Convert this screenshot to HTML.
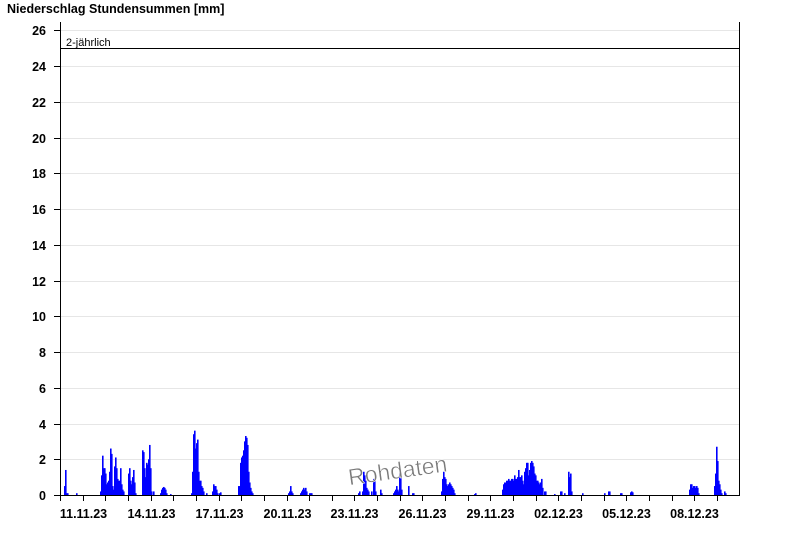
<!DOCTYPE html>
<html><head><meta charset="utf-8"><style>
html,body{margin:0;padding:0;background:#fff;width:800px;height:550px;overflow:hidden}
svg{display:block;font-family:"Liberation Sans",Arial,sans-serif}
</style></head><body>
<svg id="s" width="800" height="550" xmlns="http://www.w3.org/2000/svg">
<text x="7" y="13" font-size="12.5" font-weight="bold" fill="#000">Niederschlag Stundensummen [mm]</text>
<g id="grid" stroke="#e6e6e6" stroke-width="1"></g>
<g id="bars" fill="#0000ff"></g>
<line x1="60" y1="48.5" x2="740" y2="48.5" stroke="#000" stroke-width="1"/>
<text x="66" y="46" font-size="11" fill="#000">2-jährlich</text>
<line x1="60.5" y1="22" x2="60.5" y2="496" stroke="#000"/>
<line x1="739.5" y1="22" x2="739.5" y2="496" stroke="#000"/>
<line x1="60" y1="495.5" x2="740" y2="495.5" stroke="#000"/>
<g id="ax" font-size="12.5" font-weight="bold" fill="#000"></g>
<text x="347" y="478" font-size="23" fill="#7a7a7a" stroke="#fff" stroke-width="0.5" transform="rotate(-8 400 465)">Rohdaten</text>
</svg>
<script>
var ns="http://www.w3.org/2000/svg";
function el(p,t,a,txt){var e=document.createElementNS(ns,t);for(var k in a)e.setAttribute(k,a[k]);if(txt)e.textContent=txt;document.getElementById(p).appendChild(e);}
function Y(v){return 495-v*17.875;}
for(var v=2;v<=26;v+=2){el('grid','line',{x1:61,x2:739,y1:Math.round(Y(v))+0.5,y2:Math.round(Y(v))+0.5});}
for(var v=0;v<=26;v+=2){var y=Math.round(Y(v))+0.5;el('ax','line',{x1:54,x2:60,y1:y,y2:y,stroke:'#000'});el('ax','text',{x:46,y:y+4.5,'text-anchor':'end'},String(v));}
var labels=['11.11.23','14.11.23','17.11.23','20.11.23','23.11.23','26.11.23','29.11.23','02.12.23','05.12.23','08.12.23'];
for(var k=0;k<30;k++){var x=Math.round(60+22.65*k)+0.5;if(x>740)break;el('ax','line',{x1:x,x2:x,y1:495,y2:501,stroke:'#000'});if(k%3==1){el('ax','text',{x:x,y:518,'text-anchor':'middle'},labels[(k-1)/3]);}}
var d=[[64,.5],[65,1.4],[66,.1],[67,.1],[76,.1],
[100,.2],[101,1.1],[102,2.2],[103,1.5],[104,1.5],[105,1.2],[106,.6],[107,.7],[108,.8],[109,1.3],[110,2.6],[111,2.3],[112,.5],[113,.3],[114,1.6],[115,2.1],[116,1.5],[117,.9],[118,.8],[119,.8],[120,1.5],[121,.6],[122,.3],[123,.2],
[128,1.2],[129,1.5],[130,.8],[131,.6],[132,1.0],[133,1.4],[134,.7],[135,.1],
[142,2.5],[143,2.4],[144,1.5],[145,1.0],[146,1.8],[147,1.7],[148,2.0],[149,2.8],[150,1.5],[151,.2],[153,.2],
[160,.1],[161,.3],[162,.4],[163,.45],[164,.4],[165,.3],[166,.1],[170,.05],
[191,.1],[192,1.3],[193,3.4],[194,3.6],[195,2.6],[196,2.9],[197,3.1],[198,1.3],[199,.8],[200,.8],[201,.5],[202,.4],[203,.2],[206,.1],
[212,.2],[213,.6],[214,.5],[215,.5],[216,.3],[217,.1],[219,.1],[220,.15],
[238,.5],[239,.5],[240,1.8],[241,2.1],[242,2.2],[243,2.5],[244,3.0],[245,3.3],[246,3.2],[247,2.8],[248,1.3],[249,.7],[250,.4],[251,.2],[252,.1],
[288,.1],[289,.2],[290,.5],[291,.2],[292,.1],[300,.1],[301,.2],[302,.3],[303,.4],[304,.3],[305,.4],[306,.2],[309,.1],[310,.1],[311,.1],
[358,.1],[359,.2],[362,.2],[363,1.3],[364,1.1],[365,.8],[366,.4],[367,.3],[368,.2],[371,.2],[373,.9],[374,.9],[375,.2],[380,.3],[381,.1],
[393,.1],[394,.2],[395,.3],[396,.5],[397,.3],[398,.2],[399,1.2],[400,1.2],[401,.3],[408,.5],[412,.1],[413,.1],
[441,.2],[442,.9],[443,1.3],[444,1.0],[445,.9],[446,.6],[447,.5],[448,.6],[449,.7],[450,.6],[451,.5],[452,.4],[453,.3],[454,.1],[474,.05],[475,.1],
[502,.3],[503,.6],[504,.7],[505,.7],[506,.8],[507,.8],[508,.9],[509,.8],[510,.8],[511,.9],[512,.9],[513,.8],[514,1.1],[515,.9],[516,.9],[517,1.0],[518,1.4],[519,1.0],[520,1.0],[521,1.1],[522,.8],[523,.6],[524,1.3],[525,1.5],[526,1.8],[527,1.8],[528,1.1],[529,1.4],[530,1.8],[531,1.9],[532,1.8],[533,1.6],[534,1.2],[535,1.1],[536,.8],[537,.8],[538,.7],[539,.6],[540,.7],[541,.9],[542,.4],[544,.2],[545,.2],
[554,.05],[560,.2],[561,.2],[564,.1],[568,1.3],[569,1.0],[570,1.2],[571,.2],[582,.1],
[604,.1],[608,.2],[609,.2],[620,.1],[621,.1],[630,.15],[631,.2],[632,.15],
[689,.3],[690,.6],[691,.6],[692,.4],[693,.5],[694,.5],[695,.4],[696,.5],[697,.4],[698,.1],
[714,.5],[715,1.2],[716,2.7],[717,1.9],[718,.8],[719,.6],[720,.3],[721,.1],[724,.2],[725,.1]];
d.forEach(function(b){var h=b[1]*17.875;el('bars','rect',{x:b[0],y:495-h,width:1.6,height:h});});
</script>
</body></html>
